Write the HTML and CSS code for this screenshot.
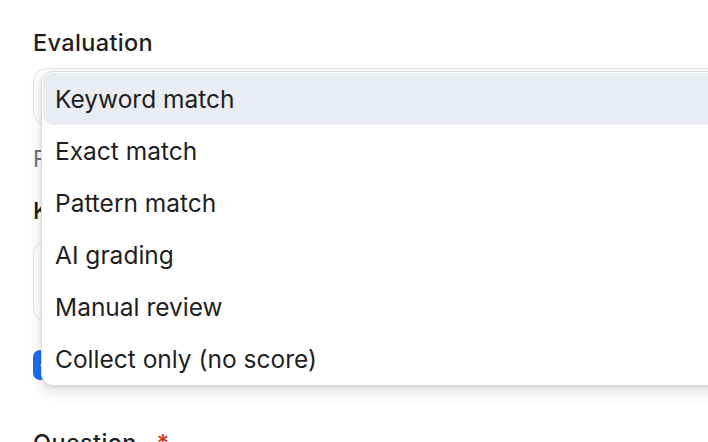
FILE: index.html
```html
<!DOCTYPE html>
<html lang="en">
<head>
<meta charset="utf-8">
<title>Evaluation</title>
<link rel="stylesheet" href="styles.css">
</head>
<body>
<div class="form">
  <div class="field field-eval">
    <div class="label">Evaluation</div>
    <div class="select">Keyword match</div>
    <div class="helper">For each answer, choose how it is scored.</div>
  </div>
  <div class="field field-keywords">
    <div class="label">Keywords</div>
    <div class="textarea">photosynthesis, chlorophyll</div>
  </div>
  <div class="check-row">
    <span class="checkbox"><svg viewBox="0 0 24 24" width="22" height="22"><path d="M5 12.5l4.5 4.5L19 7.5" fill="none" stroke="#fff" stroke-width="2.6" stroke-linecap="round" stroke-linejoin="round"/></svg></span>
    <span class="check-label">Case sensitive</span>
  </div>
  <div class="field field-question">
    <div class="label">Question<span class="req">*</span></div>
  </div>

  <ul class="menu">
    <li class="item active">Keyword match</li>
    <li class="item">Exact match</li>
    <li class="item">Pattern match</li>
    <li class="item">AI grading</li>
    <li class="item">Manual review</li>
    <li class="item">Collect only (no score)</li>
  </ul>
</div>
</body>
</html>
```
FILE: styles.css
```css
html, body {
  margin: 0;
  padding: 0;
  background: #ffffff;
  overflow: hidden;
}
body {
  width: 708px;
  height: 442px;
  font-family: "Inter", "Noto Sans", sans-serif;
  color: #1f1f1f;
}
.form {
  position: relative;
  width: 740px;
  padding: 29px 0 0 33px;
}
.label {
  font-size: 23.5px;
  line-height: 28px;
  font-weight: 500;
  letter-spacing: 0.35px;
  color: #1f1f1f;
}
.select {
  margin-top: 11px;
  border: 1px solid #e1e3e6;
  border-radius: 14px;
  box-sizing: border-box;
  height: 58px;
  padding-left: 20px;
  font-size: 24px;
  line-height: 56px;
  color: #1f1f1f;
}
.helper {
  margin-top: 19px;
  font-size: 23px;
  line-height: 28px;
  color: #6f7378;
}
.field-keywords {
  margin-top: 24px;
}
.textarea {
  margin-top: 15px;
  height: 82px;
  box-sizing: border-box;
  border: 1px solid #e1e3e6;
  border-radius: 14px;
  padding: 14px 20px;
  font-size: 22px;
  color: #1f1f1f;
}
.check-row {
  margin-top: 28px;
  display: flex;
  align-items: center;
  gap: 14px;
  height: 30px;
}
.checkbox {
  width: 30px;
  height: 30px;
  border-radius: 7px;
  background: #1b6ef3;
  display: flex;
  align-items: center;
  justify-content: center;
}
.check-label {
  font-size: 22px;
}
.field-question {
  margin-top: 49px;
}
.req {
  color: #d93025;
  margin-left: 20px;
}
.menu {
  position: absolute;
  left: 41px;
  top: 71px;
  width: 720px;
  margin: 0;
  padding: 1px 0 0 1px;
  list-style: none;
  background: #ffffff;
  border: 1px solid #dcdde0;
  border-radius: 12px;
  box-shadow: 0 6px 14px rgba(0, 0, 0, 0.12), 0 1px 3px rgba(0, 0, 0, 0.10);
  box-sizing: border-box;
}
.item {
  height: 52px;
  line-height: 52px;
  padding-left: 12px;
  font-size: 24.5px;
  color: #1f1f1f;
  border-radius: 10px;
}
.item.active {
  background: #e9ecf3;
}
```
